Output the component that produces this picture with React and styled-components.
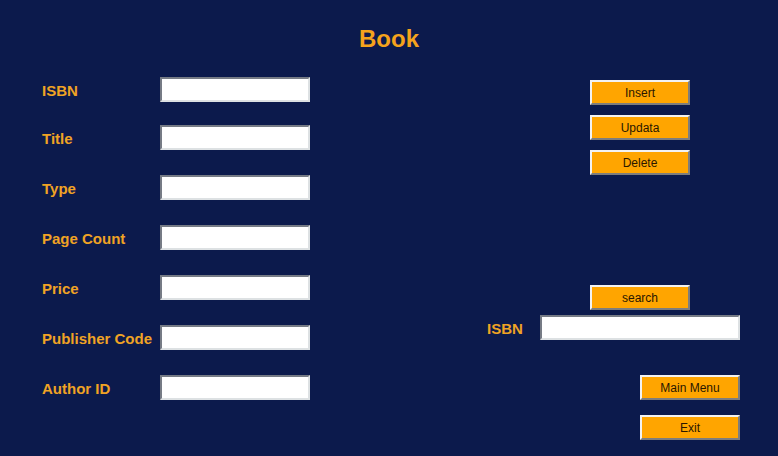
import styled, { createGlobalStyle } from 'styled-components';

const GlobalStyle = createGlobalStyle`
  html, body {
    margin: 0;
    padding: 0;
    background: #0c1a4c;
  }
  * {
    box-sizing: border-box;
  }
`;

const Page = styled.div`
  width: 778px;
  height: 456px;
  background: #0c1a4c;
  font-family: "Liberation Sans", Arial, sans-serif;
  overflow: hidden;
`;

const Header = styled.h1`
  margin: 0;
  padding-top: 24px;
  height: 54px;
  line-height: 30px;
  text-align: center;
  font-size: 24px;
  font-weight: bold;
  color: #f5a31c;
`;

const Body = styled.div`
  display: flex;
`;

const Form = styled.div`
  width: 310px;
  padding: 23px 0 0 42px;
  display: flex;
  flex-direction: column;
  gap: 25px;
`;

const Row = styled.div`
  display: flex;
  align-items: center;
  height: 25px;
  &:first-child {
    margin-bottom: -2px;
  }
`;

const Label = styled.label`
  width: ${(p) => p.$width || 118}px;
  flex: none;
  font-size: 15px;
  font-weight: bold;
  color: #f0a324;
  white-space: nowrap;
  padding-top: ${(p) => p.$shift || 1}px;
`;

const Field = styled.input`
  width: ${(p) => p.$width || 150}px;
  height: 25px;
  margin: 0;
  padding: 0 3px;
  background: #fff;
  border-style: solid;
  border-width: 2px;
  border-color: #767b85 #dde1e3 #dde1e3 #767b85;
  font-family: inherit;
  font-size: 13px;
  color: #000;
  caret-color: #000;
  outline: none;
`;

const Side = styled.div`
  margin-left: 177px;
  width: 253px;
  padding-top: 26px;
  display: flex;
  flex-direction: column;
`;

const ButtonStack = styled.div`
  display: flex;
  flex-direction: column;
  gap: ${(p) => p.$gap || 10}px;
  margin-left: ${(p) => p.$indent || 0}px;
  margin-top: ${(p) => p.$top || 0}px;
`;

const Button = styled.button`
  width: 100px;
  height: 25px;
  margin: 0;
  padding: 0;
  background: #ffa500;
  border-style: solid;
  border-width: 2px;
  border-color: #f2f2f2 #7d7d7d #7d7d7d #f2f2f2;
  font-family: "Liberation Sans", Arial, sans-serif;
  font-size: 12px;
  color: #2a1700;
  cursor: pointer;
`;

const SearchRow = styled.div`
  display: flex;
  align-items: center;
  height: 25px;
  margin-top: 5px;
`;

const fields = ['ISBN', 'Title', 'Type', 'Page Count', 'Price', 'Publisher Code', 'Author ID'];

export default function App() {
  return (
    <Page>
      <GlobalStyle />
      <Header>Book</Header>
      <Body>
        <Form>
          {fields.map((name, i) => (
            <Row key={name}>
              <Label>{name}</Label>
              <Field autoFocus={i === 0} />
            </Row>
          ))}
        </Form>
        <Side>
          <ButtonStack $indent={103}>
            <Button>Insert</Button>
            <Button>Updata</Button>
            <Button>Delete</Button>
          </ButtonStack>
          <ButtonStack $indent={103} $top={110}>
            <Button>search</Button>
          </ButtonStack>
          <SearchRow>
            <Label $width={53}>ISBN</Label>
            <Field $width={200} />
          </SearchRow>
          <ButtonStack $indent={153} $top={35} $gap={15}>
            <Button>Main Menu</Button>
            <Button>Exit</Button>
          </ButtonStack>
        </Side>
      </Body>
    </Page>
  );
}
